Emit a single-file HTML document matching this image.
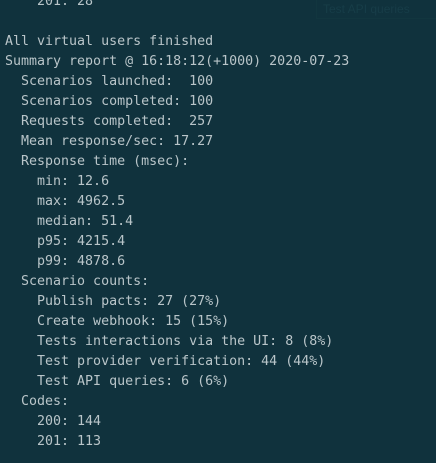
<!DOCTYPE html>
<html><head><meta charset="utf-8"><style>
html,body{margin:0;padding:0;background:#10323d;width:436px;height:463px;overflow:hidden;position:relative}
pre{position:absolute;left:5px;top:-8px;margin:0;font-family:"DejaVu Sans Mono","Liberation Mono",monospace;font-size:13.3px;line-height:20px;color:#b9c5c9}
.ghost{position:absolute;left:316px;top:-12px;width:130px;height:31px;border:1px solid #12363f;font-family:"Liberation Sans",sans-serif;font-size:12px;color:#173d48;padding:13px 0 0 6px;box-sizing:border-box}
</style></head><body>
<div class="ghost">Test API queries</div>
<pre>    201: 28

All virtual users finished
Summary report @ 16:18:12(+1000) 2020-07-23
  Scenarios launched:  100
  Scenarios completed: 100
  Requests completed:  257
  Mean response/sec: 17.27
  Response time (msec):
    min: 12.6
    max: 4962.5
    median: 51.4
    p95: 4215.4
    p99: 4878.6
  Scenario counts:
    Publish pacts: 27 (27%)
    Create webhook: 15 (15%)
    Tests interactions via the UI: 8 (8%)
    Test provider verification: 44 (44%)
    Test API queries: 6 (6%)
  Codes:
    200: 144
    201: 113</pre>
</body></html>
